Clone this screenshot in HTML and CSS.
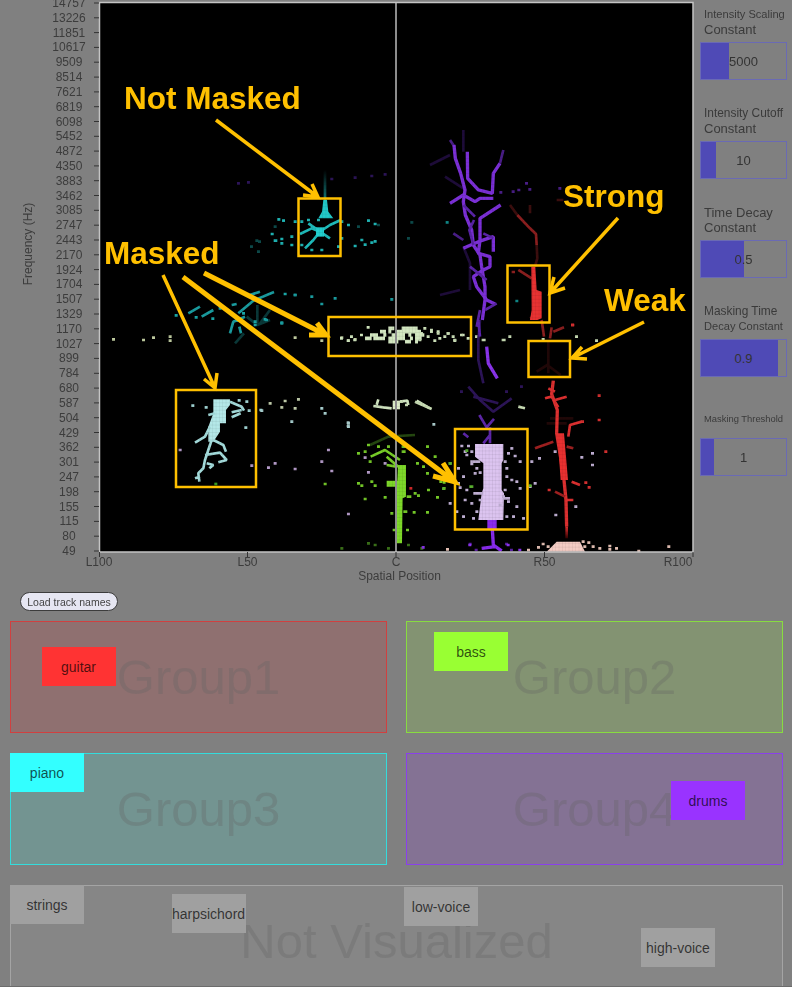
FILE: index.html
```html
<!DOCTYPE html>
<html lang="en">
<head>
    <meta charset="UTF-8">
    <meta name="viewport" content="width=device-width, initial-scale=1.0">
    <title>Spatial masking visualizer</title>
    <link rel="stylesheet" href="styles.css">
</head>
<body>
<div class="page">
    <div class="top-row">
        <svg class="plot" width="696" height="585" viewBox="0 0 696 585">
            <defs>
                <pattern id="cells" width="3.33" height="3.7" patternUnits="userSpaceOnUse">
                    <path d="M3.33 0V3.7M0 3.7H3.33" stroke="#000" stroke-opacity=".22" stroke-width=".5" fill="none"/>
                </pattern>
                <linearGradient id="glow" x1="0" y1="0" x2="0" y2="1">
                    <stop offset="0" stop-color="#000"/>
                    <stop offset="1" stop-color="#127a7a"/>
                </linearGradient>
                <linearGradient id="red-fade" x1="0" y1="0" x2="0" y2="1">
                    <stop offset="0" stop-color="#e03030"/>
                    <stop offset="1" stop-color="#300"/>
                </linearGradient>
            </defs>

            <rect class="plot-bg" x="100" y="3" width="593" height="549"/>

            <!-- piano, upper cluster -->
            <g transform="translate(250 170) scale(.3333)">
                <rect x="221" y="0" width="8" height="90" fill="url(#glow)"/>
                <polygon points="220,90 231,90 235,125 250,145 205,145 216,125" fill="#22c8c8"/>
                <path class="s-trace" stroke="#1fbcbc" d="M150 192L185 175L210 185L240 165L272 150M165 235L190 210L210 185M175 160L210 185L240 205"/>
                <rect x="198" y="172" width="24" height="28" fill="#22d0d0"/>
                <path class="s-dot" stroke="#1fb4b4" d="M82 148h9M96 152h9M131 155h9M151 155h9M171 150h9M201 150h9M271 155h9M291 165h9M351 152h9M371 162h9M62 192h9M71 212h11M91 207h9M91 220h9M121 200h9M121 225h9M151 225h9M181 240h9M211 240h9M261 230h9M271 205h9M311 228h9M331 210h9M341 224h9M361 218h9M371 214h9"/>
                <path class="s-dot" stroke="#0c4a4a" d="M321 170h9M381 165h9M471 205h9M481 157h9M16 212h9M24 215h9M0 230h9M21 245h9M71 170h9"/>
            </g>

            <!-- piano, lower cluster -->
            <g transform="translate(170 280) scale(.3333)">
                <path class="s-trace" stroke="#0a3838" d="M262 75V130M230 110L262 135L300 120M195 190L222 160M300 90L270 130"/>
                <path class="s-trace" stroke="#1a9da0" d="M55 100L90 80M95 110L130 90M185 75L200 72M205 100L250 62L312 36M240 45L270 35M180 160L190 125L225 110M208 140L213 160"/>
                <path class="s-dot" stroke="#1aa8a8" d="M14 106h9M74 112h9M124 116h9M146 85h9M281 118h9M251 125h9M251 135h9M331 128h9M341 42h9M371 45h9M196 122h9M216 100h9"/>
            </g>
            <g transform="translate(0 290) scale(.3333)">
                <path class="s-dot" stroke="#1a9da0" d="M881 15h9M931 20h9M1001 25h9M961 42h9M1171 28h9M841 100h9M795 90h9"/>
            </g>
            <g transform="translate(430 130) scale(.3333)">
                <path class="s-dot" stroke="#0f8585" d="M47 277h9M256 513h9"/>
            </g>

            <!-- harpsichord, left cluster -->
            <g transform="translate(170 280) scale(.3333)">
                <polygon fill="#b4e8e8" points="135,358 180,358 180,375 168,390 168,430 150,430 150,455 130,485 115,485 115,440 130,400 130,358"/>
                <path class="s-trace" stroke="#a4dcdc" d="M75 488L105 470L120 440M180 365L215 380L222 392M185 397L215 390M115 405L135 400M185 412L212 400M125 480L105 540L100 565L85 580L88 605M75 595L90 590M130 480L160 495L168 515M105 525L150 518L170 540L145 547M110 550L130 555L118 565"/>
                <path class="s-dot" stroke="#a0d4d4" d="M64 377h9M104 382h9M203 361h9M226 365h9M233 392h9M223 443h9M268 390h9"/>
                <path class="s-dot" stroke="#3aa020" d="M133 612h9"/>
            </g>

            <!-- strings, pale scatter around 1 kHz and 590 Hz -->
            <g transform="translate(0 290) scale(.3333)">
                <path class="s-dot" stroke="#c0cca0" d="M336 148h9M426 150h9M456 143h9M506 140h9M506 152h9M881 143h9M961 152h9M1021 143h9M1041 152h9M1061 148h9"/>
                <path class="s-dot" stroke="#c0ccaa" d="M806 340h9M851 333h9M891 328h9M841 352h9M881 355h9"/>
                <path class="s-dot" stroke="#a8d0d0" d="M961 355h9M971 370h9M871 395h9M1041 400h9M1041 410h9M781 362h9"/>
            </g>
            <g transform="translate(320 310) scale(.3333)">
                <path class="s-dot" stroke="#cfe4bc" d="M60 85h9M90 80h9M80 92h9M100 90h9M120 75h9M140 52h9M300 70h9M310 55h9M320 80h9M330 65h9M340 92h9M350 65h9M355 85h9M370 80h9M380 70h9M400 92h9M395 80h9M425 75h9M440 85h9"/>
                <path class="s-fill" stroke="#d4e8c2" d="M205 55h18M245 55h48M180 65h18M205 65h9M225 65h78M150 75h24M190 75h9M215 75h40M265 75h9M285 75h28M135 85h20M160 85h35M205 85h50M270 85h9M285 85h20M205 95h30M255 95h18M285 95h9"/>
                <path class="s-trace" stroke="#d0e4c0" d="M175 268L170 285M160 288L190 292L215 295M240 275L262 272L265 285M290 272L330 295"/>
                <rect x="218" y="272" width="22" height="26" fill="#dcecc8"/>
                <path class="s-dot" stroke="#a8c8c8" d="M80 338h9M80 348h9M337 343h9"/>
            </g>
            <g transform="translate(400 290) scale(.3333)">
                <path class="s-dot" stroke="#c8dcb4" d="M90 120h9M110 130h9M140 130h9M160 150h9M180 135h9M225 140h12M245 150h12M305 150h12M325 140h9M425 148h9M525 140h9M585 152h9M55 150h9"/>
                <path class="s-trace" stroke="#c8dcb4" d="M45 335L95 357M355 350L375 355"/>
                <path class="s-dot" stroke="#c8dcb4" d="M0 335h9M15 345h9"/>
            </g>

            <!-- drums -->
            <g transform="translate(430 130) scale(.3333)">
                <path class="s-trace" stroke="#1e0c3a" d="M100 0V65M0 105L60 75M30 495L90 480M120 480V400L100 350M45 140L100 175"/>
                <path class="s-trace" stroke="#4a1e88" d="M60 30L72 48M70 310L100 330M210 100L220 60"/>
                <path class="s-trace s-thick" stroke="#7c30d8" d="M72 45L76 85L92 130L105 180L100 215L106 255L125 300L130 345L150 375L155 410L165 470L165 510L157 570"/>
                <path class="s-trace s-thick" stroke="#7c30d8" d="M112 65L113 145L145 180L187 190L190 130L210 100M60 220L100 195L135 215L150 205L190 205M212 225L150 265L150 330L145 370L180 380L180 410L160 420L130 440L140 470L170 510L195 522M100 355L145 335L190 320L190 365"/>
                <path class="s-trace" stroke="#5a24a8" d="M132 270L118 300L130 345M160 310L190 325M120 410L170 450M100 225L135 260M150 540L140 590M165 540L200 520"/>
                <path class="s-dot" stroke="#4a1e88" d="M208 187h9M245 185h9M262 180h9M285 160h9M295 178h9M385 175h9"/>
            </g>
            <g transform="translate(440 320) scale(.3333)">
                <path class="s-trace" stroke="#2c1458" d="M120 0L115 60L115 120L130 190M85 200L120 240L160 275L215 235M100 230L175 250"/>
                <path class="s-dot" stroke="#2c1458" d="M60 215h9M240 200h9M195 215h9"/>
                <path class="s-trace" stroke="#5a22b0" d="M115 0L120 50"/>
                <path class="s-trace s-thick" stroke="#8a34ec" d="M140 80L145 130L172 175"/>
                <path class="s-trace" stroke="#5d26a8" d="M118 285L140 322L162 297M150 322V370M70 340L85 352M150 345L130 370"/>
                <rect x="142" y="598" width="28" height="30" fill="#8a2cf0"/>
                <path class="s-trace s-thick" stroke="#8a2cf0" d="M157 628L160 675L185 693M125 685L165 680"/>
                <path class="s-dot" stroke="#5a20a0" d="M86 672h9M195 672h9M104 690h9M210 690h9"/>
            </g>

            <!-- guitar -->
            <g transform="translate(430 130) scale(.3333)">
                <path class="s-trace" stroke="#3c0e0e" d="M240 225L262 255M320 345L322 385L315 410M300 225V250M380 210H400"/>
                <path class="s-trace" stroke="#8c1f1f" d="M262 255L300 295L318 312L320 345M265 420L305 445M245 426H255M300 565L320 560"/>
                <polygon fill="#e83232" points="304,410 316,410 320,480 335,485 335,565 322,570 300,570 305,540"/>
                <path class="s-dot" stroke="#e03030" d="M423 585h9"/>
            </g>
            <g transform="translate(440 320) scale(.3333)">
                <path class="s-trace" stroke="#8c1f1f" d="M305 0L312 50M335 22L330 55M340 35L372 22"/>
                <path class="s-trace" stroke="#200707" d="M325 60V160M290 155L322 135L362 165M330 295H400M320 310H380"/>
                <path class="s-trace s-thick" stroke="#dd3030" d="M340 182L335 222L352 270L350 340L360 400L372 480L378 540L380 620"/>
                <path class="s-trace" stroke="#a02020" d="M285 385L340 365M380 380L400 385M345 515L375 530"/>
                <path class="s-trace" stroke="#dd3030" d="M315 235L335 230L355 262M345 240L380 230M385 350L390 315L425 305M395 485L420 495M380 540L400 540M325 205L345 215"/>
                <polygon fill="#e83030" points="352,340 372,340 384,480 362,480"/>
                <rect x="376" y="620" width="8" height="35" fill="url(#red-fade)"/>
                <path class="s-dot" stroke="#d83030" d="M394 15h9M473 227h9M473 300h9M493 395h9M433 488h9M443 502h9M323 510h9M423 305h9"/>
            </g>

            <!-- low voice -->
            <g transform="translate(320 310) scale(.3333)">
                <path class="s-trace" stroke="#254810" d="M150 405L205 380L285 375"/>
                <path class="s-trace" stroke="#7ad028" d="M152 440L195 420L240 450M200 440L235 470M200 465L230 470"/>
                <polygon fill="#7ed82a" points="234,465 258,465 258,560 248,565 246,700 228,700 226,560 230,530 200,530 200,512 232,512"/>
                <path class="s-dot" stroke="#74c828" d="M141 405h9M111 430h9M131 425h9M171 410h9M201 410h9M146 455h9M111 520h9M121 527h9M151 515h9M161 527h9M11 522h9M131 567h9M191 562h9M281 550h9M291 557h9M321 540h9M348 562h9M318 607h9M278 607h9M258 660h9M211 610h9M218 660h9M318 410h9M288 460h9M341 440h9M306 470h9M318 490h9M368 535h9M368 517h9M358 515h9M386 460h9M245 410h12M245 425h12M260 560h14M250 605h12"/>
                <path class="s-dot" stroke="#3a7018" d="M141 700h9M161 705h9M61 715h9M201 715h9M261 705h9M301 715h9"/>
                <path class="s-dot" stroke="#d02828" d="M268 535h9"/>
            </g>

            <!-- high voice scatter, lavender -->
            <g transform="translate(0 290) scale(.3333)">
                <path class="s-dot" stroke="#b49ac8" d="M536 480h9M751 527h9M801 533h9M821 520h9M881 537h9M961 515h9M981 480h9M991 543h9M1041 672h9M1101 547h9M1091 503h9M1151 520h9"/>
            </g>
            <g transform="translate(440 320) scale(.3333)">
                <polygon fill="#dcc4f0" points="105,372 190,372 190,420 185,430 185,510 192,520 190,600 115,600 125,520 130,505 130,430 105,410"/>
                <path class="s-dot" stroke="#c0b0d4" d="M61 378h9M81 378h9M71 395h9M76 405h9M91 395h9M211 385h9M201 400h9M221 408h9M236 425h9M271 425h9M294 415h9M91 432h9M106 445h9M116 458h9M51 445h9M66 470h9M101 460h9M191 425h9M196 445h9M196 470h9M226 485h9M211 480h9M236 505h9M56 503h9M76 510h9M191 510h9M186 530h9M201 545h9M226 560h9M71 540h9M91 550h9M66 590h9M106 575h9M96 595h9M196 590h9M216 590h9M246 595h9M26 550h9M46 575h9M281 490h9M266 500h9M421 412h9M453 400h9M453 435h9M343 585h9M403 560h9M341 395h9M51 490h9M176 555h9M116 540h9M91 425h30M100 520h30M190 535h20"/>
                <path class="s-dot" stroke="#5ab030" d="M76 392h9M88 500h12M266 497h9M6 506h9M26 430h9"/>
            </g>

            <!-- bottom band, pink -->
            <g transform="translate(400 290) scale(.3333)">
                <polygon fill="#f4ccc4" points="470,755 540,755 555,785 440,785"/>
                <path class="s-dot" stroke="#e4c0b4" d="M381 780h9M411 772h9M425 762h9M440 770h9M545 755h9M562 758h9M550 770h9M575 770h9M595 775h9M625 768h9M625 778h9M645 775h9M802 770h9M712 783h9M138 778h9"/>
                <path class="s-dot" stroke="#8a34ec" d="M205 765h9M320 765h9M355 780h9M65 772h9"/>
            </g>

            <!-- faint purple scatter up top -->
            <g transform="scale(.3333)">
                <path class="s-dot" stroke="#2c1458" d="M711 550h9M741 547h9M991 537h9M1061 533h9M1111 528h9M1151 523h9"/>
            </g>

            <rect x="100" y="3" width="593" height="549" fill="url(#cells)"/>

            <path class="center-line" d="M396 2V552"/>
            <path class="axis-line" d="M99.5 552V2.5H693V552H99"/>
            <path class="tick" d="M94 3h5M94 17.8h5M94 32.6h5M94 47.4h5M94 62.2h5M94 77.1h5M94 91.9h5M94 106.7h5M94 121.5h5M94 136.3h5M94 151.1h5M94 165.9h5M94 180.7h5M94 195.5h5M94 210.3h5M94 225.2h5M94 240h5M94 254.8h5M94 269.6h5M94 284.4h5M94 299.2h5M94 314h5M94 328.8h5M94 343.6h5M94 358.4h5M94 373.3h5M94 388.1h5M94 402.9h5M94 417.7h5M94 432.5h5M94 447.3h5M94 462.1h5M94 476.9h5M94 491.7h5M94 506.5h5M94 521.4h5M94 536.2h5M94 551h5M99.5 552v5M247.5 552v5M396 552v5M544.5 552v5M693 552v5"/>

            <g class="tick-label">
                <text x="69" y="3">14757</text>
                <text x="69" y="17.8">13226</text>
                <text x="69" y="32.6">11851</text>
                <text x="69" y="47.4">10617</text>
                <text x="69" y="62.2">9509</text>
                <text x="69" y="77.1">8514</text>
                <text x="69" y="91.9">7621</text>
                <text x="69" y="106.7">6819</text>
                <text x="69" y="121.5">6098</text>
                <text x="69" y="136.3">5452</text>
                <text x="69" y="151.1">4872</text>
                <text x="69" y="165.9">4350</text>
                <text x="69" y="180.7">3883</text>
                <text x="69" y="195.5">3462</text>
                <text x="69" y="210.3">3085</text>
                <text x="69" y="225.2">2747</text>
                <text x="69" y="240">2443</text>
                <text x="69" y="254.8">2170</text>
                <text x="69" y="269.6">1924</text>
                <text x="69" y="284.4">1704</text>
                <text x="69" y="299.2">1507</text>
                <text x="69" y="314">1329</text>
                <text x="69" y="328.8">1170</text>
                <text x="69" y="343.6">1027</text>
                <text x="69" y="358.4">899</text>
                <text x="69" y="373.3">784</text>
                <text x="69" y="388.1">680</text>
                <text x="69" y="402.9">587</text>
                <text x="69" y="417.7">504</text>
                <text x="69" y="432.5">429</text>
                <text x="69" y="447.3">362</text>
                <text x="69" y="462.1">301</text>
                <text x="69" y="476.9">247</text>
                <text x="69" y="491.7">198</text>
                <text x="69" y="506.5">155</text>
                <text x="69" y="521.4">115</text>
                <text x="69" y="536.2">80</text>
                <text x="69" y="551">49</text>
                <text x="99" y="562">L100</text>
                <text x="247.5" y="562">L50</text>
                <text x="396" y="562">C</text>
                <text x="544.5" y="562">R50</text>
                <text x="678" y="562">R100</text>
                <text x="399.5" y="576">Spatial Position</text>
                <text transform="translate(28 244) rotate(-90)">Frequency (Hz)</text>
            </g>

            <!-- annotations -->
            <g class="note-box">
                <rect x="298.5" y="198.5" width="42" height="57.5"/>
                <rect x="328.5" y="317" width="142.5" height="39"/>
                <rect x="176" y="390" width="80" height="97"/>
                <rect x="455" y="429" width="72.5" height="100.5"/>
                <rect x="507.5" y="265.5" width="42" height="57"/>
                <rect x="528.5" y="341" width="41.5" height="36"/>
            </g>
            <g class="note-arrow">
                <path d="M216 120L318 197M312 184L318 197L303 195"/>
                <path d="M163 275L215 388M204 379L215 388L217 373"/>
                <path d="M550 293L618 218M554 277L550 293L565 288"/>
                <path d="M572 358L644 322M582 347L572 358L587 359"/>
            </g>
            <g class="note-arrow note-arrow-wide">
                <path d="M183 277L455 482M443 463L455 482L433 476"/>
                <path d="M204 273L326 335M317 323L326 335L309 335"/>
            </g>
            <g class="note-text">
                <text x="124" y="109">Not Masked</text>
                <text x="104" y="264">Masked</text>
                <text x="563" y="207">Strong</text>
                <text x="604" y="311">Weak</text>
            </g>
        </svg>

        <aside class="controls">
            <div class="control">
                <div class="control-label"><span class="fit-11">Intensity Scaling</span><span class="fit-13">Constant</span></div>
                <div class="slider"><div class="slider-fill" style="width:33%"></div><span class="slider-value">5000</span></div>
            </div>
            <div class="control">
                <div class="control-label"><span class="fit-12">Intensity Cutoff</span><span class="fit-13">Constant</span></div>
                <div class="slider"><div class="slider-fill" style="width:18%"></div><span class="slider-value">10</span></div>
            </div>
            <div class="control">
                <div class="control-label"><span class="fit-13">Time Decay</span><span class="fit-13">Constant</span></div>
                <div class="slider"><div class="slider-fill" style="width:50%"></div><span class="slider-value">0.5</span></div>
            </div>
            <div class="control">
                <div class="control-label"><span class="fit-12">Masking Time</span><span class="fit-11">Decay Constant</span></div>
                <div class="slider"><div class="slider-fill" style="width:91%"></div><span class="slider-value">0.9</span></div>
            </div>
            <div class="control">
                <div class="control-label"><span class="fit-9">Masking Threshold</span></div>
                <div class="slider"><div class="slider-fill" style="width:15%"></div><span class="slider-value">1</span></div>
            </div>
        </aside>
    </div>

    <button class="load-btn" type="button">Load track names</button>

    <div class="groups">
        <div class="group group-red">
            <span class="group-name">Group1</span>
            <div class="track track-guitar">guitar</div>
        </div>
        <div class="group group-green">
            <span class="group-name">Group2</span>
            <div class="track track-bass">bass</div>
        </div>
        <div class="group group-cyan">
            <span class="group-name">Group3</span>
            <div class="track track-piano">piano</div>
        </div>
        <div class="group group-purple">
            <span class="group-name">Group4</span>
            <div class="track track-drums">drums</div>
        </div>
        <div class="group group-none">
            <span class="group-name">Not Visualized</span>
            <div class="track track-strings">strings</div>
            <div class="track track-harpsichord">harpsichord</div>
            <div class="track track-low">low-voice</div>
            <div class="track track-high">high-voice</div>
        </div>
    </div>
</div>
</body>
</html>
```

FILE: styles.css
```css
html, body {
    margin: 0;
    height: 100%;
    overflow: hidden;
    background: #808080;
}
body {
    font-family: "Liberation Sans", Arial, sans-serif;
    color: #333;
}
.page {
    height: 987px;
    box-sizing: border-box;
    overflow: hidden;
    border-bottom: 1px solid #6c6c6c;
    filter: blur(0.55px);
}
.top-row {
    display: flex;
    height: 585px;
}
.plot {
    display: block;
    flex: none;
}
.plot-bg {
    fill: #000;
}
.s-trace {
    fill: none;
    stroke-width: 8;
    stroke-linejoin: bevel;
}
.s-thick {
    stroke-width: 10;
}
.s-dot {
    fill: none;
    stroke-width: 8;
}
.s-fill {
    fill: none;
    stroke-width: 11;
}
.center-line {
    fill: none;
    stroke: #8c8c8c;
    stroke-width: 2;
}
.axis-line {
    fill: none;
    stroke: #c4c4c4;
    stroke-width: 1.5;
}
.tick {
    fill: none;
    stroke: #333;
    stroke-width: 1;
}
.tick-label text {
    font-size: 12px;
    fill: #3c3c3c;
    text-anchor: middle;
    dominant-baseline: central;
}
.note-box rect {
    fill: none;
    stroke: #ffc000;
    stroke-width: 2.5;
}
.note-arrow path {
    fill: none;
    stroke: #ffc000;
    stroke-width: 3.5;
}
.note-arrow-wide path {
    stroke-width: 5;
}
.note-text text {
    font-size: 31.5px;
    font-weight: bold;
    fill: #ffc000;
}

/* sliders on the right */
.controls {
    display: flex;
    flex-direction: column;
    gap: 26px;
    width: 87px;
    margin-left: 4px;
    padding-top: 7px;
}
.control-label {
    display: flex;
    flex-direction: column;
    justify-content: center;
    height: 30px;
    margin-bottom: 5px;
    padding-left: 4px;
    line-height: 15px;
    white-space: nowrap;
    color: #3a3a3a;
}
.fit-9 { font-size: 9.4px; }
.fit-11 { font-size: 11.1px; }
.fit-12 { font-size: 11.9px; }
.fit-13 { font-size: 13px; }
.slider {
    position: relative;
    display: flex;
    align-items: center;
    justify-content: center;
    height: 38px;
    box-sizing: border-box;
    border: 1px solid #6a6ab4;
}
.slider-fill {
    position: absolute;
    left: 0;
    top: 0;
    bottom: 0;
    background: #4f4ab6;
}
.slider-value {
    position: relative;
    font-size: 13px;
    color: #333;
}

.load-btn {
    display: block;
    width: 98px;
    height: 19px;
    margin: 7px 0 0 20px;
    padding: 0;
    font-family: inherit;
    font-size: 10.5px;
    color: #444;
    background: #e6e6f2;
    border: 1px solid #3c3c3c;
    border-radius: 10px;
}

/* track groups */
.groups {
    display: grid;
    grid-template-columns: 377px 377px;
    grid-auto-rows: 112px;
    gap: 20px 19px;
    margin: 10px 0 0 10px;
}
.group {
    position: relative;
    display: flex;
    align-items: center;
    justify-content: center;
    box-sizing: border-box;
    border: 1px solid;
}
.group-name {
    font-size: 49px;
    line-height: 48px;
    color: rgba(100, 100, 100, 0.3);
}
.group-red { background: #8f7070; border-color: #d04040; }
.group-green { background: #839372; border-color: #88dc40; }
.group-cyan { background: #739491; border-color: #33dcdc; }
.group-purple { background: #847294; border-color: #8a40ec; }
.group-none {
    grid-column: 1 / 3;
    background: #868686;
    border-color: #a4a4a4;
}
.track {
    position: absolute;
    display: flex;
    align-items: center;
    justify-content: center;
    width: 74px;
    height: 39px;
    font-size: 14px;
    color: rgba(0, 0, 0, 0.7);
    white-space: nowrap;
}
.track-guitar { left: 30.5px; top: 25px; background: #ff3333; }
.track-bass { left: 27px; top: 10px; background: #99ff33; }
.track-piano { left: -1px; top: -1px; background: #33ffff; }
.track-drums { left: 264px; top: 27px; background: #9933ff; }
.track-strings { left: -1px; top: -1px; background: #a0a0a0; }
.track-harpsichord { left: 160.5px; top: 8px; background: #a0a0a0; }
.track-low { left: 393px; top: 1px; background: #a0a0a0; }
.track-high { left: 630px; top: 42px; background: #a0a0a0; }
```
